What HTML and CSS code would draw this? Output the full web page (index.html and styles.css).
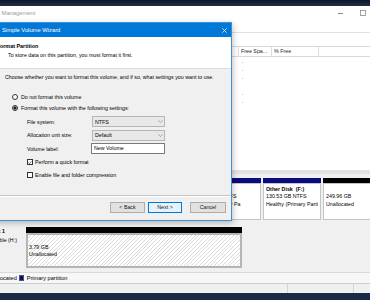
FILE: index.html
```html
<!DOCTYPE html>
<html lang="en">
<head>
    <meta charset="UTF-8">
    <meta name="viewport" content="width=device-width, initial-scale=1.0">
    <title>Disk Management - Simple Volume Wizard</title>
    <link rel="stylesheet" href="styles.css">
</head>
<body>
    <div class="desktop-top"></div>

    <div class="window">
        <div class="titlebar">
            <span class="win-title">Computer Management</span>
            <div class="win-controls">
                <svg width="5" height="1" viewBox="0 0 5 1"><rect width="5" height="1" fill="#8a8a8a"/></svg>
                <svg width="6" height="6" viewBox="0 0 6 6"><rect x="0.5" y="0.5" width="5" height="5" fill="none" stroke="#8a8a8a" stroke-width="0.8"/></svg>
            </div>
        </div>
        <div class="menubar"></div>
        <div class="toolbar"></div>

        <!-- volume list -->
        <div class="list-head">
            <div class="col col-capacity">Capacity</div>
            <div class="col col-free">Free Spa...</div>
            <div class="col col-pct">% Free</div>
            <div class="col col-rest"></div>
        </div>
        <div class="list-body">
            <div class="list-row"><span class="mark"></span></div>
            <div class="list-row"><span class="mark"></span></div>
            <div class="list-row"><span class="mark"></span></div>
            <div class="list-row blank"><span class="mark"></span></div>
            <div class="list-row"><span class="mark"></span></div>
            <div class="list-row"><span class="mark"></span></div>
        </div>

        <div class="splitter"></div>

        <!-- graphical disk view -->
        <div class="disks">
            <div class="disk disk-0">
                <div class="disk-label">
                    <b>Disk 0</b>
                    <span>Basic</span>
                </div>
                <div class="parts">
                    <div class="part part-a"><div class="bar"></div><div class="pbox"></div></div>
                    <div class="part part-b"><div class="bar"></div><div class="pbox"></div></div>
                    <div class="part part-c"><div class="bar"></div><div class="pbox"></div></div>
                    <div class="part part-d"><div class="bar"></div><div class="pbox"></div></div>
                    <div class="part part-e">
                        <div class="bar"></div>
                        <div class="pbox">
                            <b>Local Disk (C:)</b>
                            <span>1863.02 GB NTFS</span>
                            <span>Healthy (Primary Pa</span>
                        </div>
                    </div>
                    <div class="part part-f">
                        <div class="bar"></div>
                        <div class="pbox">
                            <b>Other Disk&nbsp; (F:)</b>
                            <span>130.53 GB NTFS</span>
                            <span>Healthy (Primary Partition)</span>
                        </div>
                    </div>
                    <div class="part part-g">
                        <div class="bar unalloc"></div>
                        <div class="pbox">
                            <span>&nbsp;</span>
                            <span>249.96 GB</span>
                            <span>Unallocated</span>
                        </div>
                    </div>
                </div>
            </div>

            <div class="disk disk-1">
                <div class="disk-label">
                    <b class="dl-name">Disk 1</b>
                    <span class="dl-type">Removable (H:)</span>
                </div>
                <div class="parts">
                    <div class="part part-h">
                        <div class="bar unalloc"></div>
                        <div class="pbox hatched">
                            <span>&nbsp;</span>
                            <span>3.79 GB</span>
                            <span>Unallocated</span>
                        </div>
                    </div>
                </div>
            </div>
        </div>

        <div class="legend">
            <span class="legend-item first"><span class="swatch swatch-unalloc"></span>Unallocated</span>
            <span class="legend-item"><span class="swatch swatch-primary"></span>Primary partition</span>
        </div>

        <div class="statusbar">
            <div class="status-cell status-main"></div>
            <div class="status-cell status-mid"></div>
            <div class="status-cell status-end"></div>
        </div>
    </div>

    <div class="taskbar"></div>

    <!-- wizard dialog on top of the console -->
    <div class="wizard">
        <div class="wiz-title">
            <span>Simple Volume Wizard</span>
            <svg width="5" height="5" viewBox="0 0 5 5"><path d="M0.3 0.3L4.7 4.7M4.7 0.3L0.3 4.7" stroke="#fff" stroke-width="0.7"/></svg>
        </div>
        <div class="wiz-header">
            <div class="wiz-heading">Format Partition</div>
            <div class="wiz-sub">To store data on this partition, you must format it first.</div>
        </div>
        <div class="wiz-body">
            <p class="wiz-intro">Choose whether you want to format this volume, and if so, what settings you want to use.</p>

            <label class="radio"><span class="radio-dot"></span>Do not format this volume</label>
            <label class="radio checked"><span class="radio-dot"></span>Format this volume with the following settings:</label>

            <div class="settings">
                <span>File system:</span>
                <div class="combo">
                    <span>NTFS</span>
                    <svg width="5" height="3" viewBox="0 0 5 3"><path d="M0.4 0.4L2.5 2.5L4.6 0.4" fill="none" stroke="#777" stroke-width="0.6"/></svg>
                </div>
                <span>Allocation unit size:</span>
                <div class="combo">
                    <span>Default</span>
                    <svg width="5" height="3" viewBox="0 0 5 3"><path d="M0.4 0.4L2.5 2.5L4.6 0.4" fill="none" stroke="#777" stroke-width="0.6"/></svg>
                </div>
                <span>Volume label:</span>
                <div class="textbox">New Volume</div>
            </div>

            <label class="check first">
                <span class="check-box"><svg width="5" height="5" viewBox="0 0 5 5"><path d="M0.6 2.6L1.9 3.9L4.4 1" fill="none" stroke="#222" stroke-width="0.8"/></svg></span>
                Perform a quick format
            </label>
            <label class="check"><span class="check-box"></span>Enable file and folder compression</label>
        </div>
        <div class="wiz-sep"></div>
        <div class="wiz-footer">
            <button class="btn btn-back">&lt; Back</button>
            <button class="btn btn-next">Next &gt;</button>
            <button class="btn btn-cancel">Cancel</button>
        </div>
    </div>
</body>
</html>
```

FILE: styles.css
```css
* {
    box-sizing: border-box;
}

body {
    margin: 0;
    width: 370px;
    height: 300px;
    overflow: hidden;
    position: relative;
    background: #1c2b46;
    font-family: "Liberation Sans", Arial, sans-serif;
    font-size: 5.3px;
    line-height: 8px;
    color: #000;
}

.desktop-top {
    height: 6px;
    background: linear-gradient(#0d1628, #1f2f4c);
}

.taskbar {
    height: 7px;
    background: #1b2a47;
}

/* console window behind the wizard */
.window {
    height: 287px;
    display: flex;
    flex-direction: column;
    background: #fff;
}

.titlebar {
    flex: 0 0 16px;
    display: flex;
    align-items: center;
    justify-content: space-between;
    padding-bottom: 2px;
}

.win-title {
    margin-left: -25.5px;
    font-size: 5.8px;
    color: #9b9b9b;
    white-space: nowrap;
}

.win-controls {
    display: flex;
    align-items: center;
    gap: 17px;
    margin-right: 4px;
}

.menubar {
    flex: 0 0 11px;
    border-bottom: 1px solid #e2e2e2;
}

.toolbar {
    flex: 0 0 13px;
}

.list-head {
    flex: 0 0 11px;
    display: flex;
    border-top: 1px solid #d9d9d9;
    border-bottom: 1px solid #d9d9d9;
    color: #222;
}

.col {
    border-right: 1px solid #dedede;
    padding-left: 2px;
    line-height: 9px;
    white-space: nowrap;
    overflow: hidden;
}

.col-capacity { flex: 0 0 239px; }
.col-free { flex: 0 0 33px; }
.col-pct { flex: 0 0 47px; }
.col-rest { flex: 1; border-right: 0; }

.list-body {
    flex: 0 0 113px;
    padding-top: 1px;
}

.list-row {
    height: 8px;
    padding-left: 242px;
    display: flex;
    align-items: center;
}

.mark {
    width: 1px;
    height: 1px;
    background: #f0c27d;
}

.list-row.blank .mark {
    visibility: hidden;
}

.splitter {
    flex: 0 0 4px;
    background: #e2e2e2;
}

/* disk map */
.disks {
    flex: 0 0 98px;
    background: #f0f0f0;
    padding-top: 4px;
}

.disk {
    display: flex;
}

.disk-1 {
    margin-top: 7px;
}

.disk-label {
    flex: 0 0 26px;
    overflow: hidden;
    white-space: nowrap;
    line-height: 9px;
}

.disk-label b,
.disk-label span {
    display: block;
}

.dl-name { margin-left: -10.7px; }
.dl-type { margin-left: -20.2px; }

.parts {
    flex: 1;
    display: flex;
    gap: 2px;
    overflow: hidden;
}

.part {
    display: flex;
    flex-direction: column;
    min-width: 0;
}

.part-a { flex: 0 0 29px; }
.part-b { flex: 0 0 21px; }
.part-c { flex: 0 0 61px; }
.part-d { flex: 0 0 45px; }
.part-e { flex: 0 0 71px; }
.part-f { flex: 0 0 58px; }
.part-g { flex: 1 0 50px; }
.part-h { flex: 0 0 216px; }

.bar {
    height: 5px;
    background: #0b0b80;
}

.bar.unalloc {
    background: #000;
}

.disk-1 .bar {
    height: 6px;
}

.pbox {
    height: 37px;
    border: 1px solid #c3c3c3;
    background: #fff;
    padding: 1.5px 2px 0;
    line-height: 7.6px;
    white-space: nowrap;
    overflow: hidden;
}

.pbox b,
.pbox span {
    display: block;
    overflow: hidden;
}

.pbox.hatched {
    height: 35px;
    border: 2px solid #b4b4b4;
    padding: 1px 1px 0;
    background: repeating-linear-gradient(135deg, #fff 0 2px, #dadada 2px 2.7px);
}

.legend {
    flex: 0 0 11px;
    display: flex;
    align-items: center;
    gap: 2px;
    border-top: 1px solid #dadada;
    background: #f7f7f7;
    font-size: 5.6px;
    white-space: nowrap;
}

.legend-item {
    display: flex;
    align-items: center;
    gap: 3px;
}

.legend-item.first {
    margin-left: -20.8px;
}

.swatch {
    width: 5px;
    height: 6px;
    border: 1px solid #555;
}

.swatch-unalloc { background: #000; }
.swatch-primary { background: #0b0b80; }

.statusbar {
    flex: 0 0 10px;
    display: flex;
    border-top: 1px solid #cfcfcf;
    background: #f0f0f0;
}

.status-cell { border-left: 1px solid #d4d4d4; }
.status-main { flex: 0 0 287px; border-left: 0; }
.status-mid { flex: 0 0 66px; }
.status-end { flex: 1; }

/* Simple Volume Wizard */
.wizard {
    position: absolute;
    top: 22px;
    left: -30px;
    width: 262px;
    height: 199px;
    border: 1px solid #3d8fd6;
    background: #f0f0f0;
    box-shadow: 1px 2px 6px rgba(0, 0, 0, 0.25);
    display: flex;
    flex-direction: column;
}

.wiz-title {
    flex: 0 0 14px;
    background: #0078d7;
    color: #fff;
    font-size: 5.8px;
    display: flex;
    align-items: center;
    justify-content: space-between;
    padding: 0 4px 0 31px;
}

.wiz-header {
    flex: 0 0 32px;
    background: #fff;
    border-bottom: 1px solid #dcdcdc;
    padding: 5px 0 0 25.7px;
}

.wiz-heading {
    font-weight: bold;
    font-size: 5.4px;
}

.wiz-sub {
    margin: 1px 0 0 11.3px;
}

.wiz-body {
    flex: 0 0 126px;
    padding: 4px 0 0 34px;
}

.wiz-intro {
    margin: 0 0 12px;
}

.radio {
    display: flex;
    align-items: center;
    gap: 3px;
    height: 8px;
    margin-left: 7px;
}

.radio + .radio {
    margin-top: 2.5px;
}

.radio-dot {
    width: 6px;
    height: 6px;
    border-radius: 50%;
    border: 1px solid #333;
    background: #fff;
}

.radio.checked .radio-dot {
    background: radial-gradient(circle, #222 0 1.4px, #fff 1.8px);
}

.settings {
    display: grid;
    grid-template-columns: 65px 73px;
    grid-auto-rows: 11px;
    row-gap: 2.5px;
    align-items: center;
    margin: 4.5px 0 0 22px;
}

.combo {
    height: 11px;
    border: 1px solid #b5b5b5;
    background: #e8e8e8;
    display: flex;
    align-items: center;
    justify-content: space-between;
    padding: 0 1px 0 2px;
}

.textbox {
    height: 11px;
    width: 74px;
    margin-left: -1px;
    border: 1px solid #7a7a7a;
    background: #fff;
    padding-left: 2px;
    line-height: 9px;
}

.check {
    display: flex;
    align-items: center;
    gap: 2px;
    height: 8px;
    margin: 5px 0 0 22px;
}

.check.first {
    margin-top: 4px;
}

.check-box {
    width: 6px;
    height: 6px;
    border: 1px solid #333;
    background: #fff;
    display: flex;
    align-items: center;
    justify-content: center;
}

.wiz-sep {
    flex: 0 0 2px;
    border-top: 1px solid #c6c6c6;
    border-bottom: 1px solid #fff;
}

.wiz-footer {
    flex: 1;
    display: flex;
    justify-content: flex-end;
    align-items: flex-start;
    padding: 5px 5px 0 0;
}

.btn {
    height: 11px;
    padding: 0;
    border: 1px solid #adadad;
    background: #e1e1e1;
    font-family: inherit;
    font-size: 5.3px;
    line-height: 9px;
    color: #111;
}

.btn-back { width: 35px; margin-right: 3px; }
.btn-next { width: 34px; margin-right: 8px; border-color: #0078d7; background: #e5f1fb; }
.btn-cancel { width: 36px; }
```
